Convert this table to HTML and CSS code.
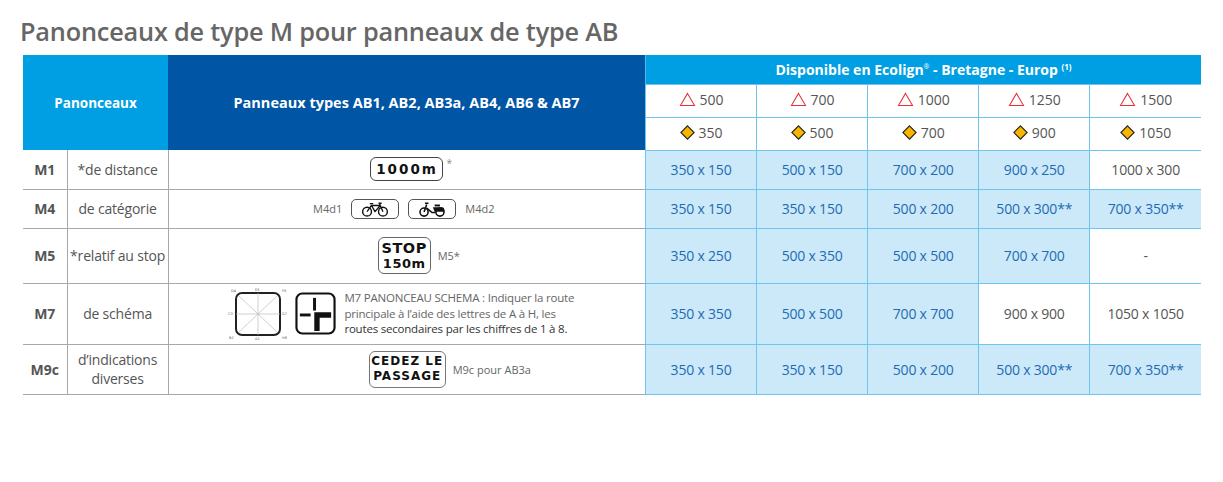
FILE: index.html
```html
<!DOCTYPE html>
<html lang="fr">
<head>
<meta charset="utf-8">
<title>Panonceaux de type M</title>
<link rel="stylesheet" href="styles.css">
</head>
<body>
<h1 class="title">Panonceaux de type M pour panneaux de type AB</h1>
<table class="grid">
  <colgroup>
    <col class="c-code"><col class="c-desc"><col class="c-sign">
    <col class="c-size"><col class="c-size"><col class="c-size"><col class="c-size"><col class="c-size">
  </colgroup>
  <thead>
    <tr class="h-top">
      <th class="h-pan" colspan="2" rowspan="3">Panonceaux</th>
      <th class="h-types" rowspan="3">Panneaux types AB1, AB2, AB3a, AB4, AB6 &amp; AB7</th>
      <th class="h-dispo" colspan="5">Disponible en Ecolign<sup class="reg">®</sup> - Bretagne - Europ <sup class="note">(1)</sup></th>
    </tr>
    <tr class="h-sub">
      <td class="h-size"><span class="sz"><svg class="tri" viewBox="0 0 18 16"><path d="M9 1.5 L16.5 14.5 H1.5 Z" fill="none" stroke="#e5323a" stroke-width="1.1"/></svg>500</span></td>
      <td class="h-size"><span class="sz"><svg class="tri" viewBox="0 0 18 16"><path d="M9 1.5 L16.5 14.5 H1.5 Z" fill="none" stroke="#e5323a" stroke-width="1.1"/></svg>700</span></td>
      <td class="h-size"><span class="sz"><svg class="tri" viewBox="0 0 18 16"><path d="M9 1.5 L16.5 14.5 H1.5 Z" fill="none" stroke="#e5323a" stroke-width="1.1"/></svg>1000</span></td>
      <td class="h-size"><span class="sz"><svg class="tri" viewBox="0 0 18 16"><path d="M9 1.5 L16.5 14.5 H1.5 Z" fill="none" stroke="#e5323a" stroke-width="1.1"/></svg>1250</span></td>
      <td class="h-size"><span class="sz"><svg class="tri" viewBox="0 0 18 16"><path d="M9 1.5 L16.5 14.5 H1.5 Z" fill="none" stroke="#e5323a" stroke-width="1.1"/></svg>1500</span></td>
    </tr>
    <tr class="h-sub">
      <td class="h-size"><span class="sz"><svg class="dia" viewBox="0 0 14 14"><path d="M7 0.8 L13.2 7 L7 13.2 L0.8 7 Z" fill="#f7b500" stroke="#222" stroke-width="1"/></svg>350</span></td>
      <td class="h-size"><span class="sz"><svg class="dia" viewBox="0 0 14 14"><path d="M7 0.8 L13.2 7 L7 13.2 L0.8 7 Z" fill="#f7b500" stroke="#222" stroke-width="1"/></svg>500</span></td>
      <td class="h-size"><span class="sz"><svg class="dia" viewBox="0 0 14 14"><path d="M7 0.8 L13.2 7 L7 13.2 L0.8 7 Z" fill="#f7b500" stroke="#222" stroke-width="1"/></svg>700</span></td>
      <td class="h-size"><span class="sz"><svg class="dia" viewBox="0 0 14 14"><path d="M7 0.8 L13.2 7 L7 13.2 L0.8 7 Z" fill="#f7b500" stroke="#222" stroke-width="1"/></svg>900</span></td>
      <td class="h-size"><span class="sz"><svg class="dia" viewBox="0 0 14 14"><path d="M7 0.8 L13.2 7 L7 13.2 L0.8 7 Z" fill="#f7b500" stroke="#222" stroke-width="1"/></svg>1050</span></td>
    </tr>
  </thead>
  <tbody>
    <tr class="r-m1">
      <td class="code">M1</td>
      <td class="desc">*de distance</td>
      <td class="sign">
        <div class="sign-row">
          <span class="plate plate-dist">1000m</span><span class="ast">*</span>
        </div>
      </td>
      <td class="v on">350 x 150</td>
      <td class="v on">500 x 150</td>
      <td class="v on">700 x 200</td>
      <td class="v on">900 x 250</td>
      <td class="v off">1000 x 300</td>
    </tr>
    <tr class="r-m4">
      <td class="code">M4</td>
      <td class="desc">de catégorie</td>
      <td class="sign">
        <div class="sign-row">
          <span class="small">M4d1</span>
          <span class="plate plate-icon">
            <svg viewBox="0 0 34 18" class="bike">
              <circle cx="8" cy="12" r="5" fill="none" stroke="#111" stroke-width="1.6"/>
              <circle cx="26" cy="12" r="5" fill="none" stroke="#111" stroke-width="1.6"/>
              <path d="M8 12 L13 5 L23 5 L26 12 M13 5 L17 12 L23 5 M11 3 H15 M22 2.5 L23 5 M21 2.5 H24.5" fill="none" stroke="#111" stroke-width="1.5" stroke-linejoin="round"/>
            </svg>
          </span>
          <span class="plate plate-icon">
            <svg viewBox="0 0 34 18" class="bike">
              <circle cx="8" cy="12.5" r="4.6" fill="none" stroke="#111" stroke-width="1.8"/>
              <circle cx="26" cy="12.5" r="4.6" fill="none" stroke="#111" stroke-width="1.8"/>
              <path d="M8 12.5 L11 4 M9 2.5 H13 M11 8 L17 13 L21 13" fill="none" stroke="#111" stroke-width="1.8"/>
              <path d="M18 7 H29 Q31 7 31 10 L31 12 L20 12 Z" fill="#111"/>
              <path d="M20 5 H26" stroke="#111" stroke-width="2.2"/>
            </svg>
          </span>
          <span class="small">M4d2</span>
        </div>
      </td>
      <td class="v on">350 x 150</td>
      <td class="v on">350 x 150</td>
      <td class="v on">500 x 200</td>
      <td class="v on">500 x 300**</td>
      <td class="v on">700 x 350**</td>
    </tr>
    <tr class="r-m5">
      <td class="code">M5</td>
      <td class="desc">*relatif au stop</td>
      <td class="sign">
        <div class="sign-row shift-stop">
          <span class="plate plate-stop"><span>STOP</span><span>150m</span></span>
          <span class="small">M5*</span>
        </div>
      </td>
      <td class="v on">350 x 250</td>
      <td class="v on">500 x 350</td>
      <td class="v on">500 x 500</td>
      <td class="v on">700 x 700</td>
      <td class="v off">-</td>
    </tr>
    <tr class="r-m7">
      <td class="code">M7</td>
      <td class="desc">de schéma</td>
      <td class="sign">
        <div class="sign-row m7-row">
          <svg class="schema" viewBox="0 0 62 54">
            <rect x="9" y="6" width="44" height="42" rx="6" fill="none" stroke="#222" stroke-width="2"/>
            <path d="M12 9 L50 45 M50 9 L12 45 M31 6 V48 M9 27 H53" stroke="#bbb" stroke-width="0.7"/>
            <text x="4" y="5" class="lbl">D4</text>
            <text x="28" y="4" class="lbl">E5</text>
            <text x="55" y="5" class="lbl">F6</text>
            <text x="1" y="28" class="lbl">C3</text>
            <text x="55" y="28" class="lbl">G7</text>
            <text x="2" y="52" class="lbl">B2</text>
            <text x="28" y="53" class="lbl">A1</text>
            <text x="55" y="52" class="lbl">H8</text>
          </svg>
          <svg class="junction" viewBox="0 0 42 44">
            <rect x="1.5" y="1.5" width="39" height="41" rx="6" fill="#fff" stroke="#111" stroke-width="2.2"/>
            <path d="M20 6 V19" stroke="#111" stroke-width="3"/>
            <path d="M5 23.5 H16" stroke="#111" stroke-width="3"/>
            <path d="M37 23.5 H22.5 V40" fill="none" stroke="#111" stroke-width="5.5"/>
          </svg>
          <p class="m7-text">M7 PANONCEAU SCHEMA : Indiquer la route<br>principale à l’aide des lettres de A à H, les<br><span class="dark">routes secondaires par les chiffres de 1 à 8.</span></p>
        </div>
      </td>
      <td class="v on">350 x 350</td>
      <td class="v on">500 x 500</td>
      <td class="v on">700 x 700</td>
      <td class="v off">900 x 900</td>
      <td class="v off">1050 x 1050</td>
    </tr>
    <tr class="r-m9">
      <td class="code">M9c</td>
      <td class="desc">d’indications diverses</td>
      <td class="sign">
        <div class="sign-row shift-cedez">
          <span class="plate plate-cedez"><span>CEDEZ LE</span><span>PASSAGE</span></span>
          <span class="small">M9c pour AB3a</span>
        </div>
      </td>
      <td class="v on">350 x 150</td>
      <td class="v on">350 x 150</td>
      <td class="v on">500 x 200</td>
      <td class="v on">500 x 300**</td>
      <td class="v on">700 x 350**</td>
    </tr>
  </tbody>
</table>
</body>
</html>
```
FILE: styles.css
```css
html, body {
  margin: 0;
  padding: 0;
  background: #fff;
}

body {
  font-family: "Open Sans", "Noto Sans", sans-serif;
  color: #555;
  width: 1223px;
  height: 482px;
  overflow: hidden;
}

.title {
  margin: 0 0 9px 20px;
  padding-top: 16px;
  font-size: 25.3px;
  line-height: 30px;
  font-weight: 600;
  color: #666;
  letter-spacing: -0.2px;
}

.grid {
  margin-left: 23px;
  width: 1178px;
  border-collapse: collapse;
  table-layout: fixed;
}

.c-code { width: 44px; }
.c-desc { width: 101px; }
.c-sign { width: 477px; }
.c-size { width: 111px; }

.grid th, .grid td {
  padding: 0;
  text-align: center;
  vertical-align: middle;
}

.h-pan {
  background: #009fe3;
  color: #fff;
  font-size: 13.5px;
  font-weight: 700;
}

.h-types {
  background: #0055a4;
  color: #fff;
  font-size: 14.5px;
  font-weight: 700;
}

.h-top { height: 29px; }

.h-dispo {
  background: #009fe3;
  color: #fff;
  font-size: 14px;
  font-weight: 700;
  border-left: 1px solid #4fb8ea;
}

.h-dispo .reg {
  font-size: 7px;
  vertical-align: 6px;
  font-weight: 400;
}

.h-dispo .note {
  font-size: 8px;
  vertical-align: 5px;
}

.h-sub { height: 33px; }

.h-size {
  background: #fff;
  border: 1px solid #6ec6ef;
  font-size: 14px;
  color: #555;
}

.h-sub .h-size:last-child, .v:last-child { border-right: none; }

.sz {
  display: inline-flex;
  align-items: center;
  gap: 4px;
}

.tri { width: 17px; height: 15px; }
.dia { width: 15px; height: 15px; }

.r-m1, .r-m4 { height: 39px; }
.r-m5 { height: 55px; }
.r-m7 { height: 61px; }
.r-m9 { height: 50px; }

.code {
  font-size: 14px;
  font-weight: 700;
  color: #555;
  border-bottom: 1px solid #a8a8a8;
  border-right: 1px solid #a8a8a8;
}

.desc {
  font-size: 14px;
  color: #555;
  line-height: 19px;
  border-bottom: 1px solid #a8a8a8;
  border-right: 1px solid #a8a8a8;
  letter-spacing: -0.2px;
}

.sign {
  border-bottom: 1px solid #a8a8a8;
}

.v {
  font-size: 14px;
  border: 1px solid #6ec6ef;
  letter-spacing: -0.2px;
}

.v.on {
  background: #cce9f9;
  color: #1f6bb3;
}

.v.off {
  background: #fff;
  color: #555;
}

.sign-row {
  display: flex;
  align-items: center;
  justify-content: center;
  gap: 9px;
}

.small {
  font-size: 11px;
  color: #666;
}

.plate {
  display: inline-flex;
  align-items: center;
  justify-content: center;
  border: 1.5px solid #444;
  border-radius: 6px;
  background: #fff;
  color: #111;
  font-family: "DejaVu Sans", sans-serif;
  font-weight: 700;
}

.plate-dist {
  width: 73px;
  height: 24px;
  font-size: 13.5px;
  letter-spacing: 2px;
  box-sizing: border-box;
  padding-left: 2px;
}

.ast {
  font-size: 10px;
  color: #888;
  align-self: flex-start;
  margin-left: -5px;
  margin-top: -1px;
}

.r-m1 .sign-row { padding-left: 8px; }

.plate-icon {
  width: 48px;
  height: 20px;
  box-sizing: border-box;
  border-radius: 5px;
  border-color: #555;
  border-width: 1px;
}

.r-m4 .sign-row { gap: 9px; padding-right: 6px; }

.bike { width: 30px; height: 16px; }

.plate-stop {
  flex-direction: column;
  width: 53px;
  height: 37px;
  box-sizing: border-box;
  border-width: 1px;
  border-color: #666;
  font-size: 14.5px;
  line-height: 16px;
  letter-spacing: 0.5px;
}

.plate-stop span:last-child { font-size: 13px; }

.shift-stop { padding-left: 24px; gap: 7px; }

.m7-row { gap: 6px; padding-right: 12px; }

.schema { width: 62px; height: 54px; }
.schema .lbl { font-size: 3.5px; fill: #555; font-family: "DejaVu Sans", sans-serif; }

.junction { width: 41px; height: 43px; }

.m7-text {
  margin: 0 0 0 2px;
  text-align: left;
  font-size: 11.5px;
  line-height: 15.5px;
  color: #666;
  letter-spacing: -0.2px;
}

.m7-text .dark { color: #333; }

.plate-cedez {
  flex-direction: column;
  width: 77px;
  height: 37px;
  box-sizing: border-box;
  border-width: 1px;
  border-color: #777;
  font-size: 12px;
  line-height: 15px;
  letter-spacing: 1px;
}

.shift-cedez { padding-left: 86px; gap: 7px; }
```
